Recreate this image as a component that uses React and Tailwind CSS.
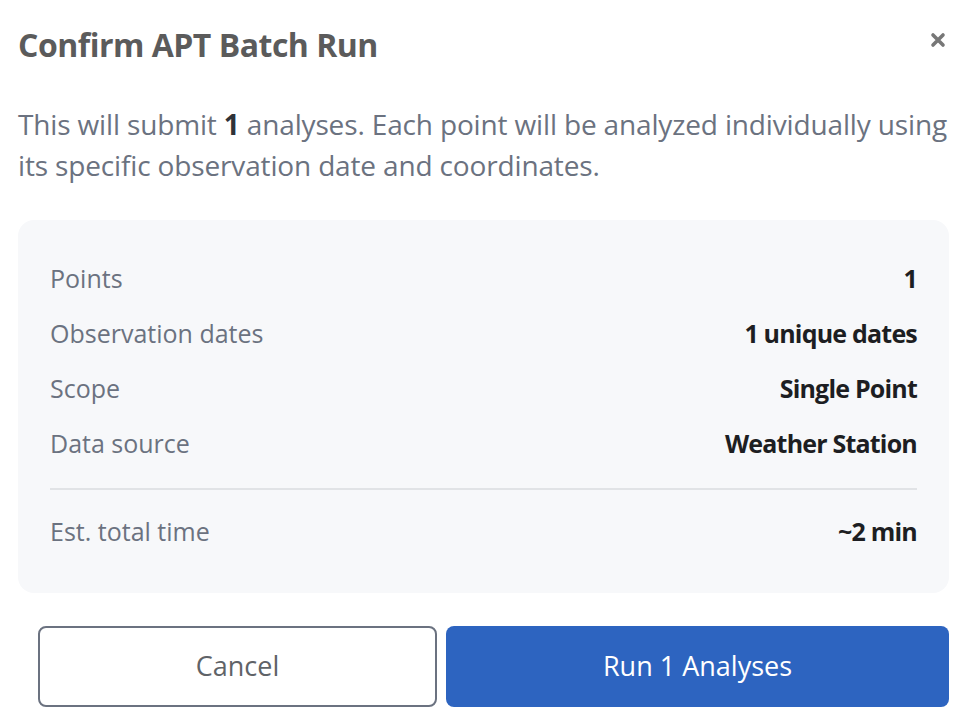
import React from 'react';

const rows = [
  { label: 'Points', value: '1' },
  { label: 'Observation dates', value: '1 unique dates' },
  { label: 'Scope', value: 'Single Point' },
  { label: 'Data source', value: 'Weather Station' },
];

const SummaryRow = ({ label, value }) => (
  <div className="flex items-center justify-between h-[55px]">
    <span className="text-[#6b7280]">{label}</span>
    <span className="font-bold text-[#1d1e22] tracking-[-0.8px]">{value}</span>
  </div>
);

const App = () => {
  return (
    <div
      className="w-[964px] h-[722px] bg-white overflow-hidden"
      style={{ fontFamily: '"Open Sans", "Noto Sans", sans-serif' }}
    >
      <div className="pl-[18px] pr-[15px]">
        {/* header */}
        <div className="flex items-center justify-between h-[90px]">
          <h2 className="text-[32px] font-bold text-[#5b5b5b] tracking-[-0.5px]">Confirm APT Batch Run</h2>
          <button className="text-[#777] mr-[3px] mt-[-10px]">
            <svg width="16" height="16" viewBox="0 0 16 16">
              <path d="M3 3 L13 13 M13 3 L3 13" stroke="currentColor" strokeWidth="3.6" strokeLinecap="round" />
            </svg>
          </button>
        </div>

        <p className="mt-[14px] text-[28px] leading-[41px] text-[#6b7280] tracking-[-0.15px]">
          This will submit <strong className="text-[#2f3238]">1</strong> analyses. Each point will be analyzed individually using its specific observation date and coordinates.
        </p>

        {/* summary */}
        <div className="mt-[34px] bg-[#f7f8fa] rounded-[16px] px-[32px] pt-[31px] pb-[34px] text-[25px]">
          {rows.map((r) => (
            <SummaryRow key={r.label} label={r.label} value={r.value} />
          ))}
          <div className="h-[2px] bg-[#e1e3e6] mt-[17px] mb-[14px]" />
          <SummaryRow label="Est. total time" value="~2 min" />
        </div>

        {/* actions */}
        <div className="flex gap-[9px] mt-[33px] pl-[20px]">
          <button className="w-[399px] h-[81px] rounded-[8px] border-2 border-[#6b7280] bg-white text-[27px] text-[#5f6368]">
            Cancel
          </button>
          <button className="flex-1 h-[81px] rounded-[8px] bg-[#2d64c0] text-[27px] text-white">
            Run 1 Analyses
          </button>
        </div>
      </div>
    </div>
  );
};

export default App;
